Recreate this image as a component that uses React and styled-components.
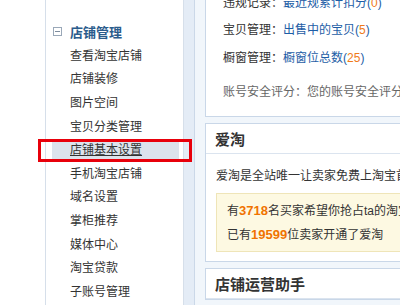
import styled, { createGlobalStyle } from 'styled-components'

const GlobalStyle = createGlobalStyle`
  html, body {
    margin: 0;
    padding: 0;
    background: #fff;
    overflow: hidden;
  }
  body {
    font-family: "Liberation Sans", "Noto Sans CJK SC", sans-serif;
    font-size: 12px;
    color: #333;
  }
`

const Page = styled.div`
  display: flex;
  width: 700px;
  height: 305px;
  padding-left: 45px;
  overflow: hidden;
`

const Sidebar = styled.div`
  width: 137px;
  flex: none;
  border-left: 1px solid #d6dfea;
  border-right: 1px solid #d6dfea;
  background: #fff;
  padding-top: 19px;
`

const GroupTitle = styled.div`
  display: flex;
  align-items: center;
  height: 25px;
  padding-left: 7px;
  font-size: 13px;
  font-weight: bold;
  color: #2b5c8c;
`

const Toggle = styled.span`
  position: relative;
  width: 7px;
  height: 7px;
  border: 1px solid #9aa8b8;
  margin-right: 8px;

  &::after {
    content: '';
    position: absolute;
    left: 1px;
    right: 1px;
    top: 3px;
    height: 1px;
    background: #7d8c9e;
  }
`

const MenuItem = styled.div`
  height: 23.6px;
  display: flex;
  align-items: center;
  padding: 0 4px 0 6px;
`

const MenuLink = styled.span`
  position: relative;
  flex: 1;
  height: 20px;
  line-height: 20px;
  padding-left: 18px;
  color: #333;
  background: ${props => (props.active ? '#dce3ec' : 'transparent')};
  text-decoration: ${props => (props.active ? 'underline' : 'none')};
`

const Marker = styled.span`
  position: absolute;
  left: -14px;
  top: -1px;
  width: 154px;
  height: 23px;
  box-sizing: border-box;
  border: 3px solid #e8000b;
`

const Main = styled.div`
  flex: 1;
  margin-left: 10px;
  border-left: 1px solid #cbd8e8;
  background: #f1f6fb;
  padding-left: 10px;
  box-shadow: -10px 0 0 #e4ecf6;
`

const Panel = styled.div`
  background: #fff;
  border: 1px solid #c9d7e8;
  margin-bottom: 6px;
  margin-top: ${props => props.offset || 0}px;
`

const PanelHeader = styled.div`
  height: 30px;
  box-sizing: border-box;
  border-bottom: 1px solid #dbe4ef;
  display: flex;
  align-items: center;
  padding-left: 9px;
  font-size: 15px;
  font-weight: bold;
  color: #333;
`

const InfoBody = styled.div`
  padding: 0 0 12px 17px;
`

const InfoRow = styled.div`
  display: flex;
  align-items: center;
  height: ${props => props.h || 28}px;
  margin-top: ${props => props.gap || 0}px;
  color: ${props => (props.muted ? '#666' : '#333')};
  white-space: nowrap;
`

const Link = styled.span`
  color: #1d5da6;
`

const Count = styled.span`
  color: #ef7a1a;
`

const PanelBody = styled.div`
  padding: 12px 0 9px 10px;
`

const Line = styled.div`
  line-height: 20px;
  white-space: nowrap;
`

const Notice = styled.div`
  margin-top: 7px;
  background: #fdf9e2;
  border: 1px solid #efe5b8;
  padding: 5px 0 4px 10px;
`

const NoticeLine = styled.div`
  line-height: 24px;
  white-space: nowrap;
`

const Strong = styled.b`
  color: #f07300;
  font-size: 13px;
`

const menu = [
  '查看淘宝店铺',
  '店铺装修',
  '图片空间',
  '宝贝分类管理',
  '店铺基本设置',
  '手机淘宝店铺',
  '域名设置',
  '掌柜推荐',
  '媒体中心',
  '淘宝贷款',
  '子账号管理',
]

export default function App() {
  return (
    <>
      <GlobalStyle />
      <Page>
        <Sidebar>
          <GroupTitle>
            <Toggle />
            店铺管理
          </GroupTitle>
          {menu.map(item => {
            const active = item === '店铺基本设置'
            return (
              <MenuItem key={item}>
                <MenuLink active={active}>
                  {item}
                  {active && <Marker />}
                </MenuLink>
              </MenuItem>
            )
          })}
        </Sidebar>
        <Main>
          <Panel offset={-13}>
            <InfoBody>
              <InfoRow h={26}>
                违规记录：<Link>最近规累计扣分(<Count>0</Count>)</Link>
              </InfoRow>
              <InfoRow>
                宝贝管理：<Link>出售中的宝贝(<Count>5</Count>)</Link>
              </InfoRow>
              <InfoRow>
                橱窗管理：<Link>橱窗位总数(<Count>25</Count>)</Link>
              </InfoRow>
              <InfoRow muted gap={6}>
                账号安全评分：您的账号安全评分为良好，请继续保持
              </InfoRow>
            </InfoBody>
          </Panel>
          <Panel>
            <PanelHeader>爱淘</PanelHeader>
            <PanelBody>
              <Line>爱淘是全站唯一让卖家免费上淘宝首页的推广渠道</Line>
              <Notice>
                <NoticeLine>
                  有<Strong>3718</Strong>名买家希望你抢占ta的淘宝首页
                </NoticeLine>
                <NoticeLine>
                  已有<Strong>19599</Strong>位卖家开通了爱淘
                </NoticeLine>
              </Notice>
            </PanelBody>
          </Panel>
          <Panel>
            <PanelHeader>店铺运营助手</PanelHeader>
          </Panel>
        </Main>
      </Page>
    </>
  )
}
